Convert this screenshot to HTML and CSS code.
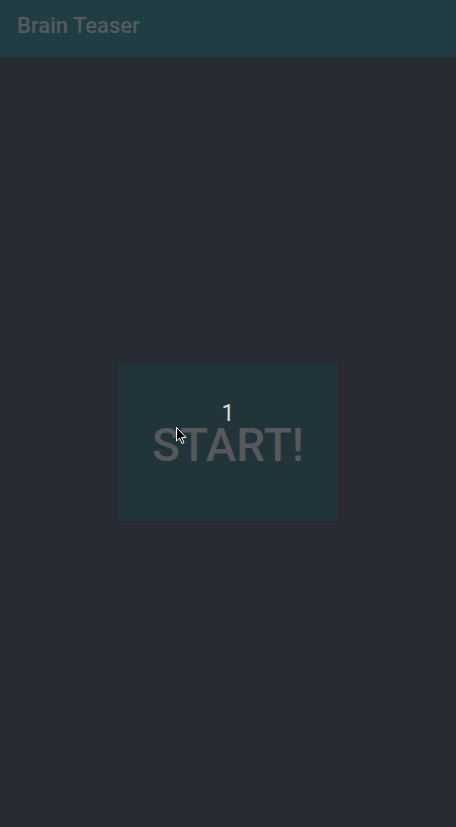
FILE: index.html
```html
<!DOCTYPE html>
<html>
<head>
<meta charset="utf-8">
<link rel="stylesheet" href="styles.css">
</head>
<body>
<header class="appbar"><h1 class="title">Brain Teaser</h1></header>
<main class="content">
  <div class="start-box">
    <div class="count">1</div>
    <div class="start">START!</div>
    <svg class="cursor" width="12" height="18" viewBox="0 0 12 18"><path d="M0.5 0.5 L0.5 14 L3.6 11 L6 16.5 L8 15.6 L5.7 10.4 L10 10.4 Z" fill="#000" stroke="#fff" stroke-width="1"/></svg>
  </div>
</main>
</body>
</html>
```
FILE: styles.css
```css
html, body { margin: 0; padding: 0; }
body {
  background: #282b33;
  width: 456px;
  height: 827px;
  font-family: Roboto, "Noto Sans", sans-serif;
  overflow: hidden;
}
.appbar {
  height: 57px;
  background: #1f3d42;
  display: flex;
  align-items: center;
  padding-left: 17px;
  padding-bottom: 6px;
  box-sizing: border-box;
}
.title {
  margin: 0;
  font-size: 22px;
  font-weight: 500;
  color: #565a61;
}
.content {
  height: 770px;
  display: flex;
  justify-content: center;
  padding-top: 307px;
  box-sizing: border-box;
}
.start-box {
  position: relative;
  width: 220px;
  height: 157px;
  background: #213439;
  display: flex;
  flex-direction: column;
  align-items: center;
  padding-top: 38px;
  box-sizing: border-box;
}
.count {
  color: #d9dde2;
  font-size: 23px;
  line-height: 23px;
}
.start {
  color: #55585d;
  font-size: 46px;
  font-weight: 500;
  line-height: 40px;
}
.cursor {
  position: absolute;
  left: 58px;
  top: 63px;
}
```
